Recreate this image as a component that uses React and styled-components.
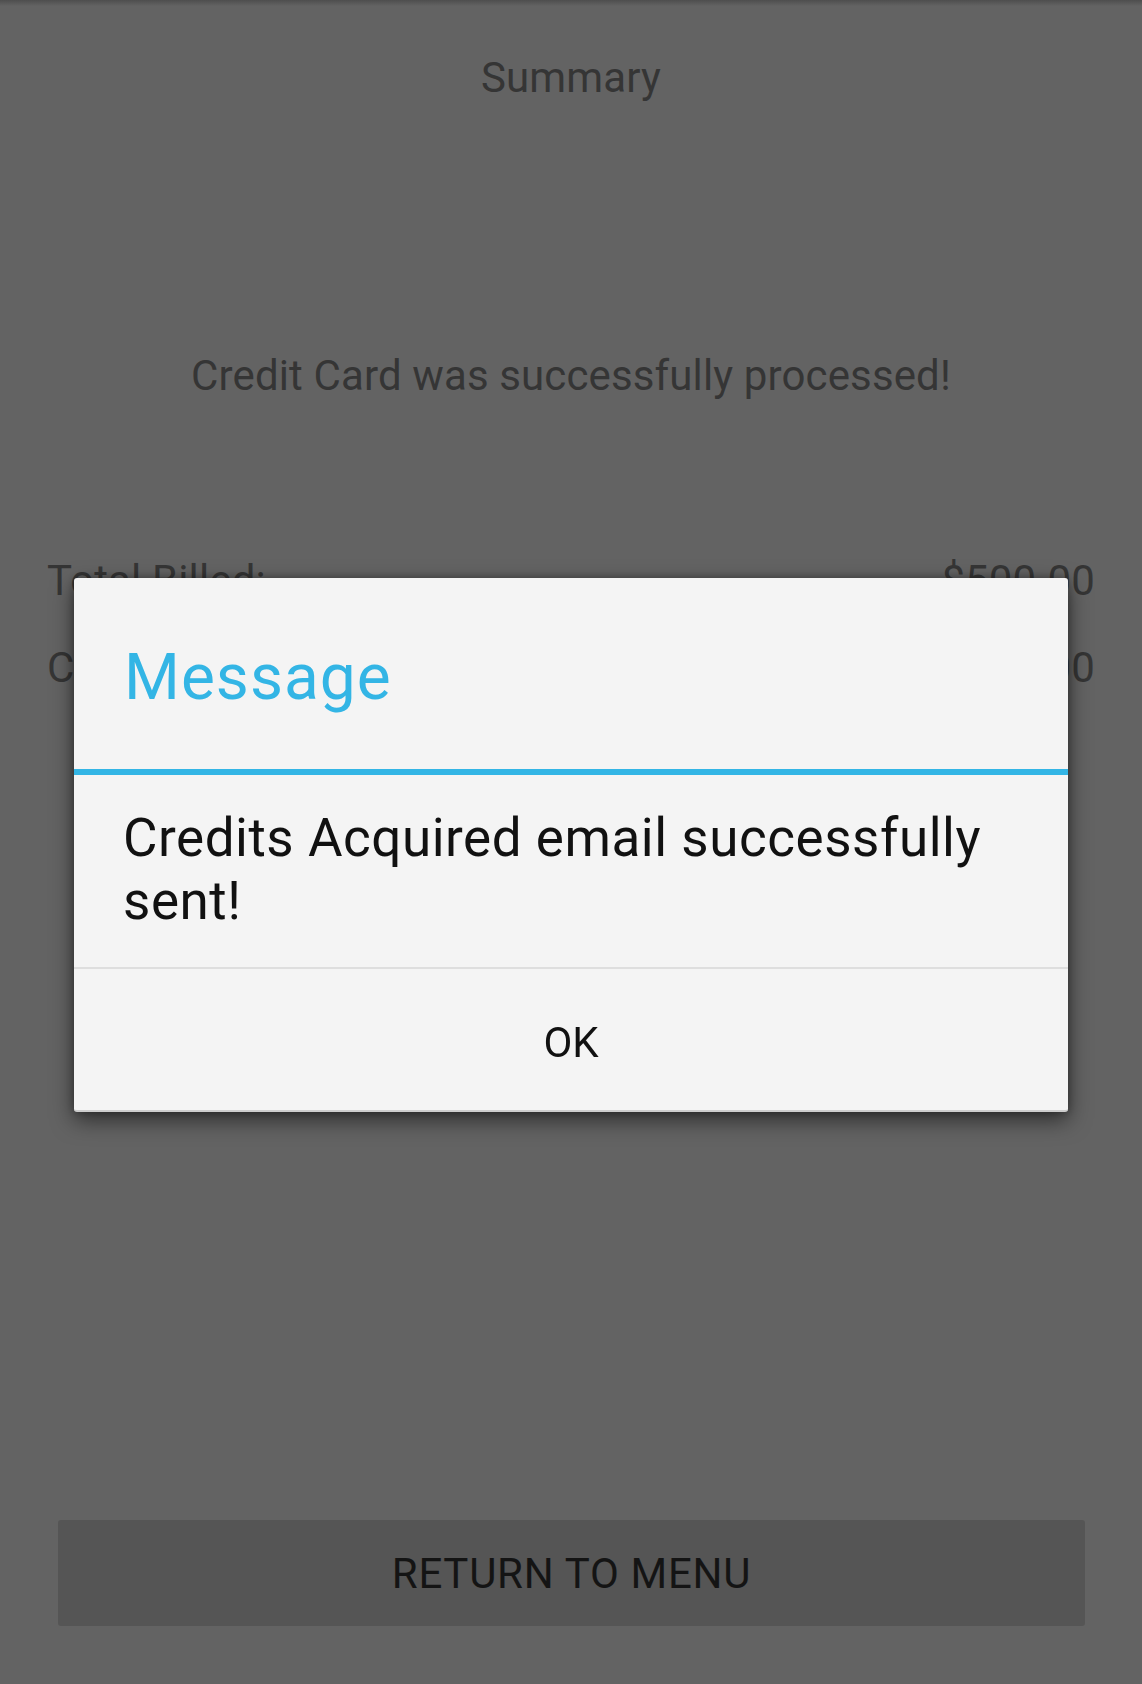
import React from 'react'
import styled, { createGlobalStyle } from 'styled-components'

const GlobalStyle = createGlobalStyle`
  html, body {
    margin: 0;
    padding: 0;
    background: #636363;
  }
  * { box-sizing: border-box; }
`

const Screen = styled.div`
  position: relative;
  min-height: 100vh;
  display: flex;
  flex-direction: column;
  padding: 0 47px;
  background: linear-gradient(to bottom, #4e4e4e 0px, #636363 6px, #636363 100%);
  font-family: Roboto, "Liberation Sans", sans-serif;
  color: #353535;
  letter-spacing: 0.008em;
`

const Heading = styled.div`
  margin-top: 53px;
  font-size: 42px;
  line-height: 50px;
  text-align: center;
`

const StatusText = styled.div`
  margin-top: 248px;
  font-size: 42px;
  line-height: 50px;
  text-align: center;
`

const Totals = styled.div`
  margin-top: 155px;
  display: flex;
  flex-direction: column;
  gap: 37px;
`

const TotalRow = styled.div`
  display: flex;
  justify-content: space-between;
  font-size: 42px;
  line-height: 50px;
`

const Spacer = styled.div`
  flex: 1;
`

const MenuButton = styled.button`
  margin: 0 10px 58px 11px;
  height: 106px;
  border: none;
  border-radius: 3px;
  background: #555555;
  color: #141414;
  font-family: Roboto, "Liberation Sans", sans-serif;
  font-size: 42px;
  letter-spacing: 0.017em;
  text-transform: uppercase;
`

const Overlay = styled.div`
  position: fixed;
  inset: 0;
  display: flex;
  align-items: center;
  justify-content: center;
  padding-top: 6px;
`

const Dialog = styled.div`
  width: 994px;
  background: #f4f4f4;
  border-radius: 3px;
  border-bottom: 2px solid #cdcdcd;
  box-shadow: 0 8px 22px rgba(0, 0, 0, 0.55), 0 0 8px rgba(0, 0, 0, 0.3);
  font-family: Roboto, "Liberation Sans", sans-serif;
  overflow: hidden;
`

const DialogTitle = styled.div`
  padding: 62px 47px 54px 50px;
  font-size: 64px;
  line-height: 75px;
  letter-spacing: 0.016em;
  color: #33b5e5;
  border-bottom: 6px solid #33b5e5;
`

const DialogBody = styled.div`
  padding: 32px 47px 34px 49px;
  font-size: 53px;
  line-height: 63px;
  letter-spacing: 0.01em;
  color: #111111;
  border-bottom: 2px solid #dedede;
`

const DialogAction = styled.div`
  height: 141px;
  padding-top: 6px;
  display: flex;
  align-items: center;
  justify-content: center;
  font-size: 42px;
  color: #111111;
`

export default function App() {
  return (
    <>
      <GlobalStyle />
      <Screen>
        <Heading>Summary</Heading>
        <StatusText>Credit Card was successfully processed!</StatusText>
        <Totals>
          <TotalRow>
            <span>Total Billed:</span>
            <span>$500.00</span>
          </TotalRow>
          <TotalRow>
            <span>Credits Acquired:</span>
            <span>500.00</span>
          </TotalRow>
        </Totals>
        <Spacer />
        <MenuButton>Return to Menu</MenuButton>
      </Screen>
      <Overlay>
        <Dialog>
          <DialogTitle>Message</DialogTitle>
          <DialogBody>Credits Acquired email successfully sent!</DialogBody>
          <DialogAction>OK</DialogAction>
        </Dialog>
      </Overlay>
    </>
  )
}
